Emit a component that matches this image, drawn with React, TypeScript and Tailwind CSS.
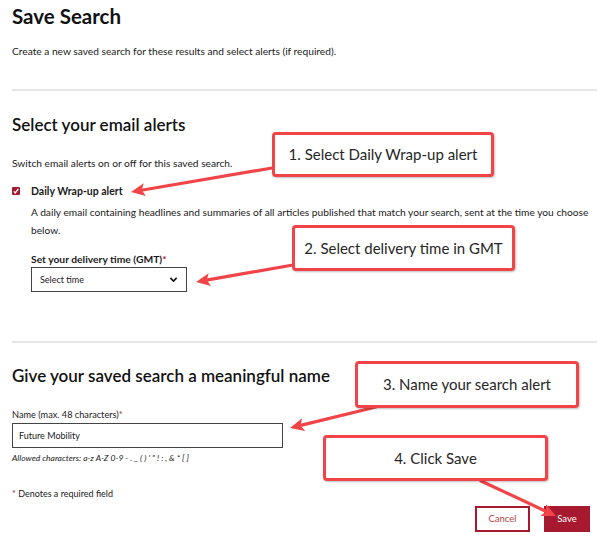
import React from "react";

const RED = "#a6192e";

function Callout({ className, children }: { className: string; children: React.ReactNode }) {
  return (
    <div
      className={`absolute flex items-center justify-center rounded-[4px] border-[3px] border-[#f04448] bg-white text-[15px] text-[#262626] shadow-[1px_1px_2px_rgba(0,0,0,0.25)] ${className}`}
      style={{ fontFamily: "Lato, 'Open Sans', sans-serif" }}
    >
      {children}
    </div>
  );
}

function Arrow({ x1, y1, x2, y2 }: { x1: number; y1: number; x2: number; y2: number }) {
  const dx = x2 - x1;
  const dy = y2 - y1;
  const len = Math.sqrt(dx * dx + dy * dy);
  const ux = dx / len;
  const uy = dy / len;
  const hl = 14;
  const hw = 6.5;
  const bx = x2 - ux * hl;
  const by = y2 - uy * hl;
  const px = -uy;
  const py = ux;
  return (
    <g>
      <line x1={x1} y1={y1} x2={bx + ux * 2} y2={by + uy * 2} stroke="#f04448" strokeWidth={3.2} strokeLinecap="round" />
      <polygon
        points={`${x2},${y2} ${bx + px * hw},${by + py * hw} ${bx + ux * 3},${by + uy * 3} ${bx - px * hw},${by - py * hw}`}
        fill="#f04448"
      />
    </g>
  );
}

export default function App() {
  return (
    <div
      className="relative h-[546px] w-[600px] overflow-hidden bg-white text-[#1a1a1a]"
      style={{ fontFamily: "Lato, 'Noto Sans', sans-serif" }}
    >
      <div className="px-[12px] pt-[3px]">
        <h1 className="text-[20.5px] font-bold leading-[26px] text-[#111]">Save Search</h1>
        <p className="mt-[15px] text-[10.2px] leading-[14px]">
          Create a new saved search for these results and select alerts (if required).
        </p>
        <div className="mt-[31px] mr-[-9px] h-[2px] bg-[#e6e6e6]" />

        <h2 className="mt-[23px] text-[17px] font-semibold leading-[22px] text-[#111]">Select your email alerts</h2>
        <p className="mt-[20px] text-[10.2px] leading-[14px]">Switch email alerts on or off for this saved search.</p>

        <div className="mt-[14px] flex items-start gap-[11px]">
          <div className="mt-[3px] flex h-[8px] w-[8px] shrink-0 items-center justify-center rounded-[1px]" style={{ backgroundColor: RED }}>
            <svg viewBox="0 0 8 8" className="h-[8px] w-[8px]">
              <path d="M1.8 4.4 L3.3 5.9 L6.3 1.8" fill="none" stroke="white" strokeWidth="1.3" />
            </svg>
          </div>
          <div className="flex-1">
            <div className="text-[10.5px] font-bold leading-[14px]">Daily Wrap-up alert</div>
            <p className="mt-[5px] mr-[-9px] text-[10.2px] leading-[18px]">
              A daily email containing headlines and summaries of all articles published that match your search, sent at the time you choose below.
            </p>
            <div className="mt-[13px] text-[10.3px] font-bold leading-[14px]">
              Set your delivery time (GMT)<span style={{ color: RED }}>*</span>
            </div>
            <div className="mt-[1px] flex h-[25px] w-[156px] items-center justify-between border border-[#444] px-[8px]">
              <span className="text-[9px]">Select time</span>
              <svg viewBox="0 0 10 10" className="h-[9px] w-[9px]">
                <path d="M1.5 3.2 L5 6.7 L8.5 3.2" fill="none" stroke="#111" strokeWidth="1.8" />
              </svg>
            </div>
          </div>
        </div>

        <div className="mt-[49px] mr-[-9px] h-[2px] bg-[#e6e6e6]" />

        <h2 className="mt-[22px] text-[17px] font-semibold leading-[22px] text-[#111]">
          Give your saved search a meaningful name
        </h2>
        <div className="mt-[22px] text-[9.2px] leading-[12px]">
          Name (max. 48 characters)<span style={{ color: RED }}>*</span>
        </div>
        <div className="mt-[2px] flex h-[25px] w-[271px] items-center border border-[#444] px-[6px] text-[9px]">
          Future Mobility
        </div>
        <div className="mt-[4px] text-[8.5px] italic leading-[12px] text-[#222]">
          Allowed characters: a-z A-Z 0-9 - . _ ( ) ' " ! : , &amp; * [ ]
        </div>
        <div className="mt-[24px] text-[9px] leading-[12px]">
          <span style={{ color: RED }}>*</span> Denotes a required field
        </div>

        <div className="mt-[6px] mr-[-2px] flex justify-end gap-[14px]">
          <button
            className="flex h-[26px] w-[55px] items-center justify-center border-2 bg-white text-[9.5px]"
            style={{ borderColor: RED, color: "#b0453f" }}
          >
            Cancel
          </button>
          <button className="flex h-[26px] w-[46px] items-center justify-center text-[9.5px] text-white" style={{ backgroundColor: RED }}>
            Save
          </button>
        </div>
      </div>

      <svg className="pointer-events-none absolute left-0 top-0" width="600" height="546">
        <Arrow x1={272} y1={168} x2={131} y2={192} />
        <Arrow x1={293} y1={265} x2={196} y2={282} />
        <Arrow x1={376} y1={407} x2={290} y2={428} />
        <Arrow x1={481} y1={481} x2={556} y2={516} />
      </svg>

      <Callout className="left-[272px] top-[132px] h-[45px] w-[222px]">1. Select Daily Wrap-up alert</Callout>
      <Callout className="left-[292px] top-[225px] h-[46px] w-[223px]">2. Select delivery time in GMT</Callout>
      <Callout className="left-[355px] top-[361px] h-[47px] w-[224px]">3. Name your search alert</Callout>
      <Callout className="left-[323px] top-[435px] h-[46px] w-[225px]">4. Click Save</Callout>
    </div>
  );
}
